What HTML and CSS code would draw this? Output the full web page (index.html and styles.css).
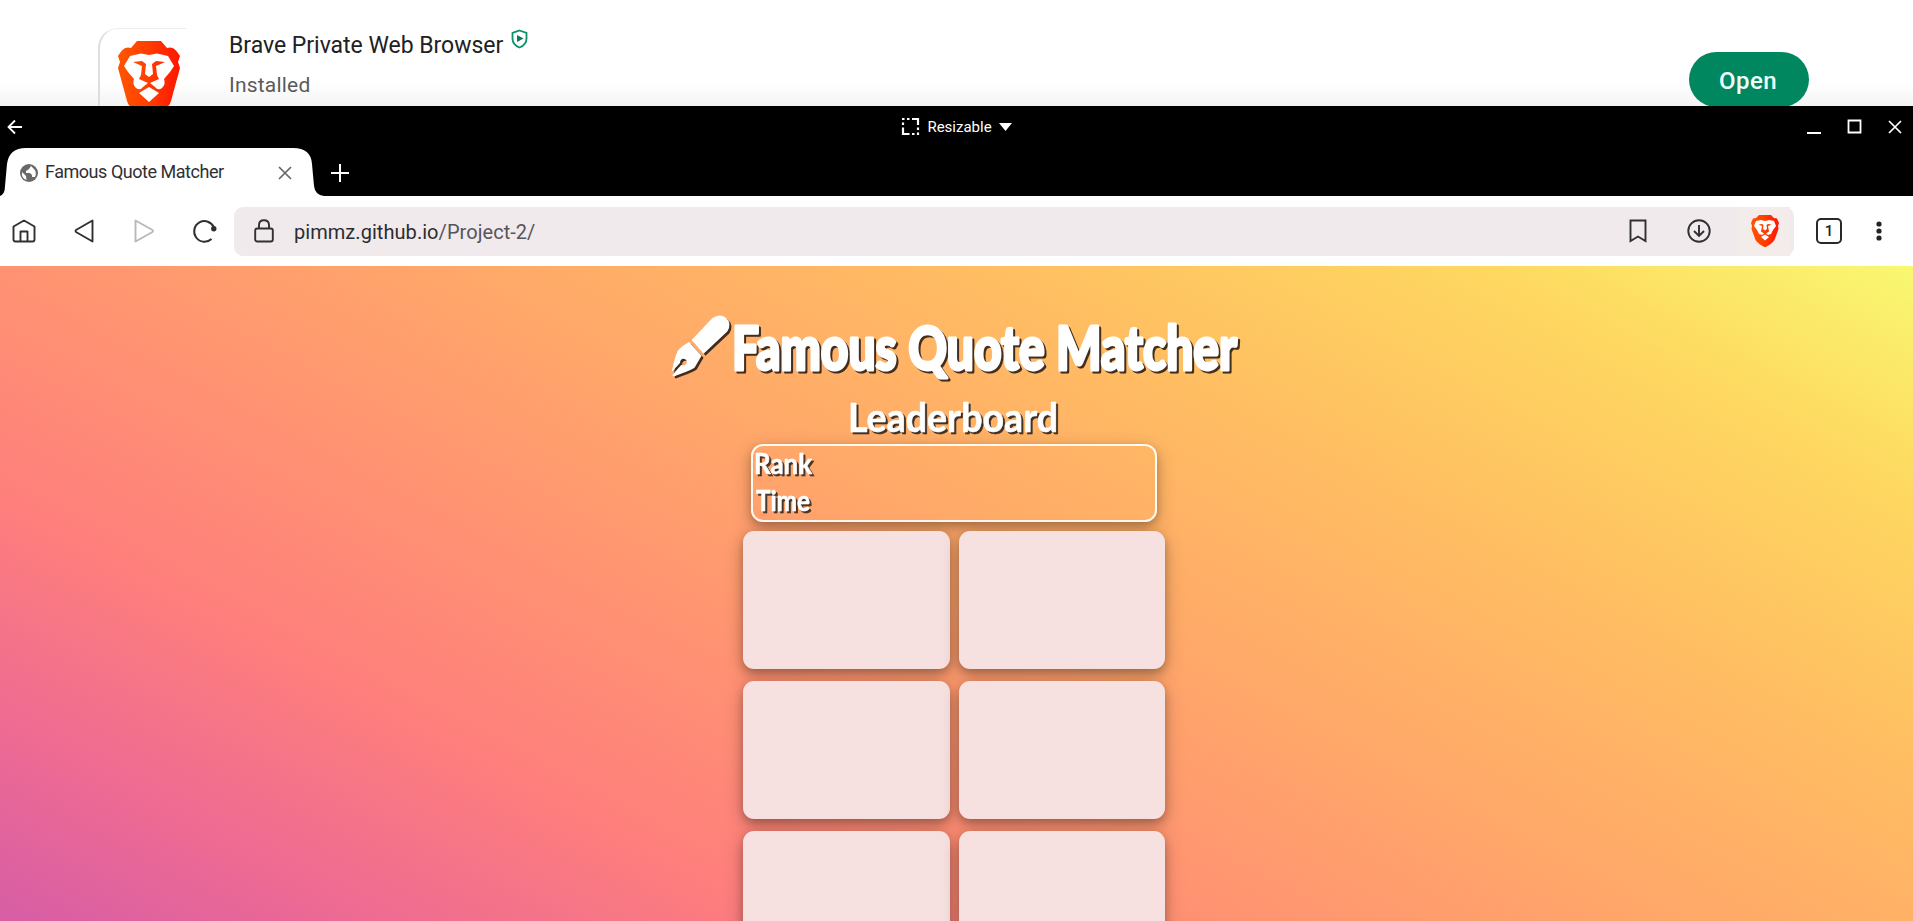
FILE: index.html
```html
<!DOCTYPE html>
<html lang="en">
<head>
<meta charset="utf-8">
<title>Famous Quote Matcher</title>
<link rel="stylesheet" href="styles.css">
</head>
<body>
<svg width="0" height="0" class="defs">
  <defs>
    <linearGradient id="flame" x1="0" x2="1"><stop offset="0" stop-color="#ff5500"/><stop offset=".45" stop-color="#ff4000"/><stop offset="1" stop-color="#ff1500"/></linearGradient>
    <symbol id="lion" viewBox="0 0 64 76">
      <path fill="url(#flame)" d="M20 0H44L50 7C55 5 59 8 63 15L61 21L63 27L54 60Q53 64 49 67L35 76Q32 78 29 76L15 67Q11 64 10 60L1 27L3 21L1 15C5 8 9 5 14 7Z"/>
      <path fill="#fff" d="M13 15L24 12.500L32 14L40 12.500L51 15L57 25L53 31L47 38Q49 43 45 47Q41 50 38 46L33 42L42 38L40 34L39 25L48 21L39 20L35 23L36 33L32 36L28 33L29 23L25 20L16 21L25 25L24 34L22 38L31 42L26 46Q23 50 19 47Q15 43 17 38L11 31L7 25ZM22 52L32 46L42 52L32 61Z"/>
    </symbol>
    <symbol id="shield-lion" viewBox="0 0 28 32">
      <path fill="url(#flame)" d="M8 0H20L23 3L26 3.500L28 8L27 11L27.500 14L23.500 25Q22 27.500 19 29.500L14 32.500L9 29.500Q6 27.500 4.500 25L.5 14L1 11L0 8L2 3.500L5 3Z"/>
      <path fill="#fff" d="M5 6L10 5L14 6L18 5L23 6L25 11L22 15L20 19L17 20L15 18.500L18 16.500L17 11L20.500 9.500L17 9L15.500 10L16 14L14 15.500L12 14L12.500 10L11 9L7.500 9.500L11 11L10 16.500L13 18.500L11 20L8 19L6 15L3 11ZM10 22L14 19.500L18 22L14 25.500Z"/>
    </symbol>
  </defs>
</svg>

<header class="store">
  <div class="app-tile"><svg class="app-logo" width="64" height="76"><use href="#lion"/></svg></div>
  <div class="app-info">
    <div class="app-name">Brave Private Web Browser
      <svg width="17" height="20" viewBox="0 0 17 20"><path d="M8.500 1.500L15.500 4V9.500C15.500 14 12.500 17 8.500 18.500C4.500 17 1.500 14 1.500 9.500V4Z" fill="none" stroke="#0f9168" stroke-width="1.800"/><path d="M6 6L12.500 9.500L6 13Z" fill="#0b7a58"/></svg>
    </div>
    <div class="app-state">Installed</div>
  </div>
  <div class="open-button">Open</div>
</header>

<div class="titlebar">
  <svg width="16" height="16" viewBox="0 0 16 16" fill="none" stroke="#fff" stroke-width="1.800"><path d="M15 8H2M8 1.500L1.500 8L8 14.500"/></svg>
  <div class="mode">
    <svg width="19" height="19" viewBox="0 0 19 19" fill="none" stroke="#fff" stroke-width="2.200"><path d="M1 2H3.500M6 2H8.500M11 2H18M17 1V8M17 10.500V13M17 15.500V18M1 17H8.500M11 17H13.500M2 18V10.500M2 8V5.500"/></svg>
    <span>Resizable</span>
    <svg width="13" height="8" viewBox="0 0 13 8"><path d="M0 0H13L6.500 8Z" fill="#fff"/></svg>
  </div>
  <div class="window-controls">
    <svg width="14" height="16" viewBox="0 0 14 16"><path d="M0 14H14" stroke="#fff" stroke-width="2"/></svg>
    <svg width="15" height="15" viewBox="0 0 15 15"><path d="M1.500 1.500H13.500V13.500H1.500Z" fill="none" stroke="#fff" stroke-width="1.800"/></svg>
    <svg width="14" height="14" viewBox="0 0 14 14"><path d="M1 1L13 13M13 1L1 13" stroke="#fff" stroke-width="1.700"/></svg>
  </div>
</div>

<div class="tabstrip">
  <div class="tab">
    <svg class="tab-shape" width="326" height="48" viewBox="0 0 326 48"><path d="M0 48Q5 46 5 38L7 16Q9 0 26 0H293Q311 0 312 16L314 38Q315 47 324 48Z" fill="#fff"/></svg>
    <svg width="18" height="18" viewBox="0 0 18 18"><circle cx="9" cy="9" r="9" fill="#69696c"/><path d="M2 8L6 12L6.500 16Q1 14 2 8ZM11 2L9 5L6 7V9H10L12 11V13H15Q17 8 14 5Z" fill="#fff"/></svg>
    <span>Famous Quote Matcher</span>
    <svg class="tab-close" width="14" height="14" viewBox="0 0 14 14"><path d="M1 1L13 13M13 1L1 13" stroke="#666" stroke-width="1.700"/></svg>
  </div>
  <svg width="18" height="18" viewBox="0 0 18 18"><path d="M9 0V18M0 9H18" stroke="#fff" stroke-width="2"/></svg>
</div>

<nav class="toolbar">
  <svg class="home" width="24" height="24" viewBox="0 0 24 24" fill="none" stroke="#303034" stroke-width="1.900" stroke-linejoin="round"><path d="M12 1.500L22.500 7.500V20.500Q22.500 22.500 20.500 22.500H3.500Q1.500 22.500 1.500 20.500V7.500ZM8.500 22V12.500H15.500V22"/></svg>
  <svg class="back" width="21" height="24" viewBox="0 0 21 24" fill="none" stroke="#303034" stroke-width="1.900" stroke-linejoin="round"><path d="M18.500 1.500V22.500L2 13Q1 12 2 11Z"/></svg>
  <svg class="forward" width="21" height="24" viewBox="0 0 21 24" fill="none" stroke="#b9b9bb" stroke-width="1.900" stroke-linejoin="round"><path d="M1.500 1.500V22.500L18.500 13Q19.500 12 18.500 11Z"/></svg>
  <svg class="reload" width="24" height="24" viewBox="0 0 24 24"><path d="M21 8.500A10.300 10.300 0 1 0 18.500 20" fill="none" stroke="#303034" stroke-width="2"/><circle cx="20.800" cy="9.700" r="2.700" fill="#303034"/></svg>
  <div class="omnibox">
    <svg width="20" height="24" viewBox="0 0 20 24" fill="none" stroke="#303034" stroke-width="1.900"><rect x="1.200" y="9.500" width="17.600" height="13" rx="2"/><path d="M5 9.500V6Q5 1.300 10 1.300Q15 1.300 15 6V9.500"/></svg>
    <span class="url">pimmz.github.io<i>/Project-2/</i></span>
    <svg class="bookmark" width="18" height="24" viewBox="0 0 18 24"><path d="M1.500 1.500H16.500V22L9 17.500L1.500 22Z" fill="none" stroke="#303034" stroke-width="1.900"/></svg>
    <svg class="download" width="24" height="24" viewBox="0 0 24 24" fill="none" stroke="#303034" stroke-width="1.900"><circle cx="12" cy="12" r="10.700"/><path d="M12 6V17M7 12L12 17L17 12"/></svg>
    <div class="shield"><svg width="28" height="32"><use href="#shield-lion"/></svg></div>
  </div>
  <div class="tab-count">1</div>
  <svg class="menu" width="6" height="20" viewBox="0 0 6 20" fill="#242428"><circle cx="3" cy="3" r="2.600"/><circle cx="3" cy="10" r="2.600"/><circle cx="3" cy="17" r="2.600"/></svg>
</nav>

<main class="game">
  <h1 class="title">
    <svg width="61" height="62" viewBox="0 0 512 512"><path fill="#fff" d="M190 205L365 22Q425-22 476 18Q532 64 489 135L290 320ZM168 222L273 338L217 435Q200 455 40 512L28 500L104 413A28 28 0 1 0 94 397L22 474Q48 350 72 300Q87 270 168 222Z"/></svg>
    <svg class="title-text" width="512" height="70"><text x="2" y="53" textLength="505" lengthAdjust="spacingAndGlyphs">Famous Quote Matcher</text></svg>
  </h1>
  <h2 class="subtitle"><svg width="214" height="46"><text x="1" y="35" textLength="210" lengthAdjust="spacingAndGlyphs">Leaderboard</text></svg></h2>
  <section class="board">
    <svg width="64" height="37"><text x="1" y="28" textLength="58" lengthAdjust="spacingAndGlyphs">Rank</text></svg>
    <svg width="64" height="37"><text x="3" y="28" textLength="54" lengthAdjust="spacingAndGlyphs">Time</text></svg>
  </section>
  <section class="cards">
    <div class="card"></div><div class="card"></div>
    <div class="card"></div><div class="card"></div>
    <div class="card"></div><div class="card"></div>
  </section>
</main>
</body>
</html>
```
FILE: styles.css
```css
* { box-sizing: border-box; }
body { margin: 0; width: 1913px; height: 921px; overflow: hidden; background: #fff; font-family: Roboto, "Liberation Sans", sans-serif; display: flex; flex-direction: column; }
svg { display: block; flex: none; overflow: visible; }
.defs { position: absolute; }

.store { height: 106px; flex: none; display: flex; overflow: hidden; background: linear-gradient(#fff 0 84px, #f3f3f3 106px); }
.app-tile { margin: 28px 0 0 98px; width: 88px; height: 100px; border-left: 2px solid #dedede; border-top: 1px solid #ececec; border-radius: 20px 0 0 0; padding: 12px 0 0 17px; }
.app-logo { height: 76px; }
.app-info { margin: 32px 0 0 43px; }
.app-name { display: flex; gap: 8px; height: 28px; line-height: 28px; font-size: 23px; letter-spacing: -.02px; color: #202124; white-space: nowrap; }
.app-name svg { margin-top: -3px; }
.app-state { margin-top: 12px; line-height: 26px; font-size: 21px; letter-spacing: .2px; color: #5a5a5d; }
.open-button { margin: 52px 104px 0 auto; width: 120px; height: 55px; line-height: 59px; padding-right: 2px; border-radius: 28px; background: #01875f; color: #f1fffa; text-align: center; font-size: 24px; font-weight: 500; letter-spacing: .4px; }

.titlebar { height: 42px; flex: none; background: #000; display: grid; grid-template-columns: 1fr auto 1fr; align-items: center; padding: 0 7px 1px 7px; color: #fff; }
.mode { display: flex; align-items: center; gap: 7px; font-size: 15px; letter-spacing: 0; }
.window-controls { justify-self: end; display: flex; align-items: center; gap: 26px; margin-right: 4px; }

.tabstrip { height: 48px; flex: none; background: #000; display: flex; align-items: center; padding-top: 2px; }
.tab { position: relative; width: 331px; height: 46px; display: flex; align-items: center; padding-left: 20px; font-size: 18px; letter-spacing: -.47px; color: #303033; }
.tab > * { position: relative; }
.tab .tab-shape { position: absolute; left: 0; top: -2px; }
.tab span { margin-left: 7px; width: 227px; padding-bottom: 3px; }
.tab-close { margin-left: 6px; }

.toolbar { height: 70px; flex: none; display: flex; align-items: center; padding-left: 12px; background: #fff; }
.back { margin-left: 38px; }
.forward { margin-left: 39px; }
.reload { margin-left: 38px; }
.omnibox { margin-left: 17px; width: 1560px; height: 49px; border-radius: 9px; background: #f0eaec; display: flex; align-items: center; padding-left: 20px; }
.url { margin-left: 20px; padding-top: 2px; width: 1336px; font-size: 20px; letter-spacing: .05px; color: #2c2c30; }
.url i { font-style: normal; color: #55555a; }
.bookmark { margin-left: -1px; }
.download { margin-left: 40px; }
.shield { margin-left: 29px; width: 50px; height: 49px; display: grid; place-items: center; background: #f3ecea; }
.tab-count { margin-left: 22px; width: 26px; height: 26px; border: 2px solid #29292d; border-radius: 5px; text-align: center; font-size: 15px; font-weight: 500; line-height: 22px; color: #242428; }
.menu { margin-left: 34px; }

.game { height: 655px; flex: none; overflow: hidden; display: flex; flex-direction: column; align-items: center; padding-right: 6px; background: linear-gradient(28deg, #a85cb8 0%, #d45ca8 11%, #ef6b92 23%, #fe7f7c 34.5%, #ff9173 45.5%, #ffa969 60%, #ffbe62 74%, #fed860 88%, #f9f871 100%) 0 0 / 1913px 890px no-repeat; }
.game text { font-family: Lato, "Open Sans", sans-serif; font-weight: 900; fill: #fff; stroke: #fff; stroke-linejoin: round; }
.title { margin: 49px 0 0 4px; display: flex; height: 70px; filter: drop-shadow(2px 2px 0 rgba(45, 30, 22, .9)); }
.title-text text { font-size: 60px; stroke-width: 3px; }
.title-text { margin-top: 2px; }
.subtitle { margin: 12px 0 0; height: 46px; filter: drop-shadow(2px 2px 0 rgba(45, 35, 30, .9)); }
.subtitle text { font-size: 41px; font-weight: 700; stroke-width: .6px; }
.board { margin-top: 1px; width: 406px; height: 79px; border: 2px solid #fffaf0; border-radius: 12px; box-shadow: 0 4px 8px rgba(0,0,0,.22), 0 6px 20px rgba(0,0,0,.2); }
.board svg { filter: drop-shadow(2px 2px 0 #493629); }
.board text { font-size: 28px; font-weight: 700; stroke-width: .6px; }
.cards { margin-top: 9px; display: grid; grid-template-columns: 207px 206px; grid-auto-rows: 138px; gap: 12px 9px; }
.card { border-radius: 11px; background: #f6e0e0; box-shadow: 0 4px 8px rgba(0,0,0,.24), 0 6px 20px rgba(0,0,0,.22); }
```
